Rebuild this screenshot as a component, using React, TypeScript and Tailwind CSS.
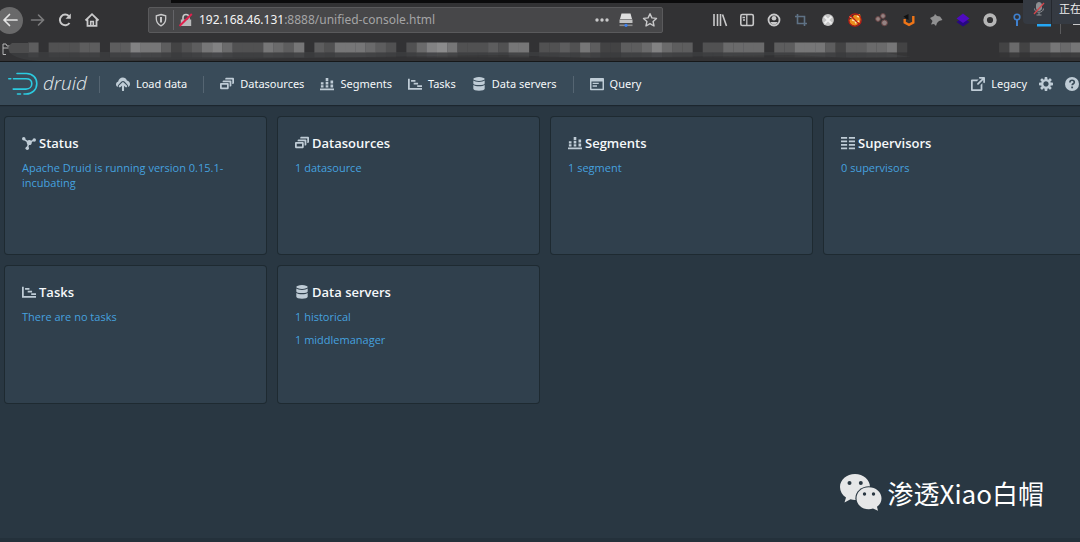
import type { ReactNode } from 'react';

type IconProps = { className?: string };

function Glyph({ className = 'size-[14px]', children }: IconProps & { children: ReactNode }) {
  return (
    <svg viewBox="0 0 16 16" className={`shrink-0 fill-[#bfccd6] ${className}`} aria-hidden="true">
      {children}
    </svg>
  );
}

const CloudUpload = (p: IconProps) => (
  <Glyph {...p}>
    <path d="M8.8 6.200a1.200 1.200 0 0 0-1.700 0l-3.600 3.600a1.200 1.200 0 0 0 1.700 1.700L6.800 10V15a1.200 1.200 0 0 0 2.400 0v-5l1.500 1.500a1.200 1.200 0 0 0 1.700-1.700z" />
    <path d="M12.500 4C11.800 1.800 10 .5 7.800.5 5 .5 2.800 2.500 2.500 5.200 1 5.700 0 7 0 8.500c0 1.300.8 2.400 1.800 2.900l.5-2L6 5.500a2.800 2.800 0 0 1 4 0l3.600 3.900.5 2c1.200-.6 1.900-1.900 1.900-3.300C16 6 14.500 4.300 12.500 4z" />
  </Glyph>
);
const MultiSelect = (p: IconProps) => (
  <Glyph {...p}>
    <path d="M12 3.980H4c-.55 0-1 .45-1 1v1h8v5h1c.55 0 1-.45 1-1v-5c0-.55-.45-1-1-1zm3-3H7c-.55 0-1 .45-1 1v1h8v5h1c.55 0 1-.45 1-1v-5c0-.55-.45-1-1-1zm-6 6H1c-.55 0-1 .45-1 1v5c0 .55.45 1 1 1h8c.55 0 1-.45 1-1v-5c0-.55-.45-1-1-1zm-1 5H2v-3h6v3z" />
  </Glyph>
);
const StackedChart = (p: IconProps) => (
  <Glyph {...p}>
    <path d="M0 13h16v2H0zM1 9.500h3V12H1zM1 6h3v2.500H1zM6.500 9.500h3V12h-3zM6.500 5.500h3v3h-3zM6.500 1h3v3.500h-3zM12 8.500h3V12h-3zM12 4h3v3.500h-3z" />
  </Glyph>
);
const Gantt = (p: IconProps) => (
  <Glyph {...p}>
    <path d="M0 2h2v10.500h14v2H0zM3.500 3.500h5v2h-5zM6.500 6.500h5v2h-5zM10.500 9.500H16v2h-5.500z" />
  </Glyph>
);
const Database = (p: IconProps) => (
  <Glyph {...p}>
    <ellipse cx="8" cy="2.300" rx="6.500" ry="2.200" />
    <path d="M1.500 4c1.200 1 3.600 1.600 6.500 1.600S13.300 5 14.500 4v3.300c0 1-2.900 1.900-6.500 1.900S1.500 8.300 1.500 7.300zM1.500 9c1.200 1 3.600 1.600 6.500 1.600s5.300-.6 6.500-1.600v4.500c0 1.300-2.900 2.300-6.500 2.300s-6.500-1-6.500-2.300z" />
  </Glyph>
);
const Application = (p: IconProps) => (
  <Glyph {...p}>
    <path fillRule="evenodd" d="M1 1h14a1 1 0 0 1 1 1v12a1 1 0 0 1-1 1H1a1 1 0 0 1-1-1V2a1 1 0 0 1 1-1zm.7 4v8.300h12.600V5zM3 6.500h7V8H3zM3 9.500h5V11H3z" />
  </Glyph>
);
const Share = (p: IconProps) => (
  <Glyph {...p}>
    <path d="M10.990 13.990h-9v-9h4.760l2-2H.99c-.55 0-1 .45-1 1v11c0 .55.45 1 1 1h11c.55 0 1-.45 1-1V7.240l-2 2v4.750zm4-14h-5c-.55 0-1 .45-1 1s.45 1 1 1h2.590L7.290 7.280a1 1 0 0 0 1.410 1.420l5.290-5.290V6c0 .55.45 1 1 1s1-.45 1-1V1c0-.56-.45-1.010-1-1.010z" />
  </Glyph>
);
const Cog = (p: IconProps) => (
  <Glyph {...p}>
    <path d="M15.19 6.39h-1.85c-.11-.37-.27-.71-.45-1.04l1.36-1.36c.31-.31.31-.82 0-1.13l-1.13-1.13c-.31-.31-.82-.31-1.13 0l-1.36 1.36c-.33-.17-.67-.33-1.04-.44V.79c0-.44-.36-.8-.8-.8h-1.6c-.44 0-.8.36-.8.8v1.86c-.39.12-.75.28-1.1.47l-1.3-1.3c-.3-.3-.79-.3-1.09 0L1.820 2.910c-.3.3-.3.79 0 1.090l1.300 1.300c-.2.34-.36.7-.48 1.090H.79c-.44 0-.8.36-.8.8v1.600c0 .44.36.8.8.8h1.850c.11.37.27.71.45 1.040l-1.360 1.360c-.31.31-.31.82 0 1.130l1.130 1.130c.31.31.82.31 1.130 0l1.360-1.360c.33.18.67.33 1.040.44v1.860c0 .44.36.8.8.8h1.600c.44 0 .8-.36.8-.8v-1.860c.39-.12.75-.28 1.100-.47l1.300 1.300c.3.3.79.3 1.090 0l1.090-1.090c.3-.3.3-.79 0-1.090l-1.300-1.300c.19-.35.36-.71.48-1.100h1.850c.44 0 .8-.36.8-.8v-1.600a.816.816 0 0 0-.81-.79zm-7.200 4.600c-1.660 0-3-1.340-3-3s1.340-3 3-3 3 1.340 3 3-1.340 3-3 3z" />
  </Glyph>
);
const Help = (p: IconProps) => (
  <Glyph {...p}>
    <circle cx="8" cy="8" r="8" />
    <path d="M5.600 6.200C5.600 4.600 6.600 3.700 8.100 3.700s2.500.9 2.500 2.200c0 1.800-2.400 1.800-2.400 3.600" fill="none" stroke="#394b59" strokeWidth="1.900" />
    <rect x="7.100" y="10.900" width="2.100" height="2" fill="#394b59" />
  </Glyph>
);
const Graph = (p: IconProps) => (
  <Glyph {...p}>
    <path d="M2 3.500l6 4 6-3M8 7.500L6 14" stroke="#bfccd6" strokeWidth="1.700" fill="none" />
    <circle cx="2" cy="3" r="2" />
    <circle cx="14" cy="4.500" r="2" />
    <circle cx="8.300" cy="7.500" r="2.900" />
    <circle cx="6" cy="14" r="2" />
  </Glyph>
);
const ListColumns = (p: IconProps) => (
  <Glyph {...p}>
    <path d="M0 1h7v2H0zM0 5h7v2H0zM0 9h7v2H0zM0 13h7v2H0zM9 1h7v2H9zM9 5h7v2H9zM9 9h7v2H9zM9 13h7v2H9z" />
  </Glyph>
);

function DruidLogo() {
  return (
    <span className="flex items-center gap-[5px]">
      <svg viewBox="0 0 30 24" className="h-6 w-[30px]" fill="none" stroke="#2ccbe0" strokeWidth="1.600" strokeLinecap="round" aria-hidden="true">
        <path d="M9 1.500h9.500c6 0 10.300 4.200 10.300 9.900 0 6.500-4.800 10.600-10.800 10.600h-2M9.500 22h3" />
        <path d="M5.500 6.700h12.500c3.500 0 5.800 2 5.800 5s-2.400 5.400-5.800 5.400H5.200M.8 6.700h2" />
      </svg>
      <span className="pb-0.5 font-['Open_Sans',sans-serif] text-[19px] leading-6 font-light text-[#e8edf1] italic">druid</span>
    </span>
  );
}

const Divider = () => <span className="h-[17px] w-px bg-[#556572]" />;

function NavLink({ icon, label }: { icon: ReactNode; label: string }) {
  return (
    <a href={`#${label}`} className="flex items-center gap-1.5 whitespace-nowrap">
      {icon}
      <span>{label}</span>
    </a>
  );
}

/* One brightness digit per censored cell; a dot is an empty cell. */
const MOSAIC =
  '...5.44455.558775345786444765' +
  '7.54777654.468974445477.445475335568655.446666.5577753556673.........363557676';
const SHADES: Record<string, string> = {
  '3': '#434344', '4': '#515152', '5': '#5d5d5e', '6': '#6a6a6b',
  '7': '#767677', '8': '#828283', '9': '#8b8b8c',
};

function BookmarkMosaic() {
  return (
    <svg className="h-[21px] w-[1090px] shrink-0" viewBox="0 0 1090 21" aria-hidden="true">
      <path d="M3 14.500V4h3l1 2h4M3 14.500h3M3 8h8" stroke="#b5b5b6" fill="none" />
      <path d="M9 12h872l30 5-60 1-60-3-200 3-90-3-270 4-80 1-50 1H40Q16 20 9 12z" fill="#3a3b3d" />
      {Array.from(MOSAIC, (c, i) => {
        if (c === '.') return null;
        const x = i * 10.22 - 2.46;
        return (
          <g key={i} fill={SHADES[c]}>
            <rect x={x} y="2.500" width="10.400" height="10" />
            <rect x={x} y="12.500" width="10.400" height="5" opacity="0.180" />
          </g>
        );
      })}
      <path d="M12 3h17v10H10q-4-6 2-10" fill="#4d4d4e" />
    </svg>
  );
}

function ToolButton({ label, children }: { label: string; children: ReactNode }) {
  return (
    <button type="button" aria-label={label} className="flex size-4 shrink-0 items-center justify-center">
      <svg viewBox="0 0 16 16" className="size-4" fill="none" stroke="#c9c9ca" strokeWidth="1.600">
        {children}
      </svg>
    </button>
  );
}

function Browser() {
  return (
    <div className="relative bg-[#323234] font-['Noto_Sans','Noto_Sans_CJK_SC',sans-serif]">
      <div className="ml-[171px] h-[3px] bg-[#0b0b0c]" />
      <div className="flex h-[37px] items-center overflow-hidden pb-[3px]">
        <button type="button" aria-label="Back" className="-ml-1 flex size-[27px] shrink-0 items-center justify-center rounded-full bg-[#69696a]">
          <svg viewBox="0 0 16 16" className="size-4" fill="none" stroke="#e4e4e4" strokeWidth="1.700" strokeLinecap="round" strokeLinejoin="round">
            <path d="M15 8H2M7.500 2.500L2 8l5.500 5.500" />
          </svg>
        </button>
        <div className="ml-[7px] flex gap-[11px]">
          <ToolButton label="Forward">
            <path d="M1.500 8h12M8.500 3l5 5-5 5" stroke="#7b7b7c" strokeLinecap="round" />
          </ToolButton>
          <ToolButton label="Reload">
            <path d="M12.500 11A5.300 5.300 0 1 1 12 4.200" strokeWidth="2" />
            <path d="M13.800 1.500v5.300H8.500z" fill="#c9c9ca" stroke="none" />
          </ToolButton>
          <ToolButton label="Home">
            <path d="M1.500 8.500L8 2.200l6.500 6.300M3.500 7.500v6.300h9V7.500" strokeWidth="1.800" />
            <path d="M6.700 14V9.500h2.600V14" />
          </ToolButton>
        </div>
        <div className="ml-12 flex h-[26px] w-[515px] shrink-0 items-center rounded-[2px] border border-[#5a5a5c] bg-[#474749] pr-1 pl-1">
          <ToolButton label="Protection">
            <path d="M8 2.500l4.700 1.300v3c0 3.500-1.700 5.500-4.700 7-3-1.500-4.700-3.500-4.700-7v-3z" strokeWidth="1.300" />
            <path d="M8 5v5.500" strokeWidth="2" />
          </ToolButton>
          <span className="mr-1 ml-1 h-5 w-px bg-[#646468]" />
          <ToolButton label="Connection is not secure">
            <path d="M5 8V5.500a3 3 0 0 1 6 0V8" />
            <path d="M2.800 7.500h10.400v6.500H2.800z" fill="#b9b9ba" stroke="none" />
            <path d="M1.500 14L13.800 2" stroke="#e0214d" strokeWidth="2" />
          </ToolButton>
          <div className="relative ml-[5px] flex-1 text-[12px] leading-4">
            <input aria-label="Address" readOnly value="192.168.46.131:8888/unified-console.html" className="absolute inset-0 w-full bg-transparent text-transparent outline-none" />
            <span className="text-[#f4f4f4]">192.168.46.131</span>
            <span className="text-[#a4a4a5]">:8888/unified-console.html</span>
          </div>
          <div className="flex gap-2">
            <ToolButton label="Page actions">
              <g fill="#c9c9ca" stroke="none">
                <circle cx="3" cy="8" r="1.700" /><circle cx="8" cy="8" r="1.700" /><circle cx="13" cy="8" r="1.700" />
              </g>
            </ToolButton>
            <ToolButton label="Server">
              <path d="M3.500 1.500h9L14 7H2z" fill="#dedede" stroke="none" />
              <path d="M1.500 7.500h13v3.500h-13z" fill="#c2c2c2" stroke="none" />
              <path d="M1.500 13.300h13" stroke="#8b8b8c" />
              <circle cx="8" cy="13.300" r="1.600" fill="#3f82f0" stroke="none" />
            </ToolButton>
            <ToolButton label="Bookmark this page">
              <path d="M8 1.700l1.900 4.200 4.600.5-3.400 3.100.9 4.500-4-2.300L4 14l.9-4.500-3.400-3.100 4.600-.5z" strokeWidth="1.400" strokeLinejoin="round" />
            </ToolButton>
          </div>
        </div>
        <div className="ml-[49px] flex shrink-0 gap-[11px]">
          <ToolButton label="Library">
            <path d="M2 2v12M5.500 2v12M8.500 2v12M10.500 2.500l4 11.500" />
          </ToolButton>
          <ToolButton label="Sidebars">
            <rect x="1.800" y="2.500" width="12.500" height="11" rx="1.500" />
            <path d="M7.800 3v10M3.500 5.500h2.500M4 8h2" strokeWidth="1.300" />
          </ToolButton>
          <ToolButton label="Account">
            <circle cx="8" cy="8" r="5.500" strokeWidth="1.800" />
            <circle cx="8" cy="6.200" r="2.300" fill="#c9c9ca" stroke="none" />
            <path d="M4.300 10h7.400c-1 2-2.300 2.500-3.700 2.500S5.300 12 4.300 10z" fill="#c9c9ca" stroke="none" />
          </ToolButton>
          <ToolButton label="Crop">
            <path d="M4.500 2v9.500H14M2 4.500h9.500V14" stroke="#5f7285" />
          </ToolButton>
          <ToolButton label="Proxy">
            <circle cx="8" cy="8" r="5.900" fill="#c4c4c4" stroke="none" />
            <path d="M4.500 4.500l7 7M11.500 4.500l-7 7" stroke="#eeeeee" strokeWidth="2" />
          </ToolButton>
          <ToolButton label="Blocker">
            <path d="M2 8l3-2 2-3 6-1 1 5-1 4-5 3-5-2z" fill="#ec8e1c" stroke="none" />
            <path d="M5 8l4 1M8 11l4-2M10 4l2 1M2 5h3" stroke="#fbe4a6" />
            <circle cx="8" cy="8" r="6.200" stroke="#bd1b14" strokeWidth="1.200" />
            <path d="M3.500 3.500l9 9" stroke="#bd1b14" strokeWidth="1.200" />
          </ToolButton>
          <ToolButton label="Cells">
            <g fill="#948383" stroke="#694444" strokeWidth="1">
              <circle cx="4" cy="7" r="2.400" /><circle cx="9" cy="4" r="2.400" /><circle cx="10.500" cy="10.800" r="2.900" />
            </g>
          </ToolButton>
          <ToolButton label="Bitbucket">
            <path d="M3.700 7v3.500L8 12.800l4.300-2.300V4" stroke="#ef7517" strokeWidth="2.400" />
            <path d="M2.500 4.500L7.500 2v6L5 6.500z" fill="#111111" stroke="none" />
          </ToolButton>
          <ToolButton label="Hunter">
            <path d="M2 6l4-2 1-2 2 2 3 .5L14.500 8 11 9l-2 2-1 3-2-2-3 .5L4.500 9z" fill="#909091" stroke="none" />
          </ToolButton>
          <ToolButton label="Layers">
            <path d="M1.500 10L8 5.500l6.500 4.500L8 14.500z" fill="#270783" stroke="none" />
            <path d="M1.500 6.500L8 1.500l6.500 5L8 11z" fill="#4f0bc0" stroke="none" />
          </ToolButton>
          <ToolButton label="Ring">
            <circle cx="8" cy="8" r="4.900" stroke="#b6b6b6" strokeWidth="3.600" />
          </ToolButton>
          <ToolButton label="Pin">
            <circle cx="8" cy="5" r="2.800" stroke="#3f80cf" />
            <path d="M8 8v6" stroke="#3f80cf" strokeWidth="2" />
          </ToolButton>
          <ToolButton label="Download">
            <path d="M1 13h14" stroke="#25a7f5" strokeWidth="3" />
          </ToolButton>
        </div>
        <span className="mt-4 ml-2 h-3 w-px shrink-0 bg-[#5b5b5d]" />
        <span className="mt-2 ml-3 h-px w-3 shrink-0 bg-[#c9c9ca]" />
      </div>
      <div className="flex h-[21px] overflow-hidden">
        <BookmarkMosaic />
      </div>
      <div className="h-px bg-[#161819]" />
      <div className="absolute top-0 right-0 flex h-6 w-[57px] overflow-hidden rounded-bl-[4px] bg-[#353a42] text-[11px] leading-[18px] text-[#eeeeee]">
        <svg viewBox="0 0 16 16" className="mt-px ml-2 size-4 shrink-0" fill="none" stroke="#8d8f93" aria-hidden="true">
          <rect x="5.500" y="1.500" width="5" height="8" rx="2.500" fill="#8d8f93" />
          <path d="M3.500 7.500c0 5 9 5 9 0M8 11.500V14M5.500 14h5" />
          <path d="M3 13L13 2" stroke="#d5454b" strokeWidth="1.300" />
        </svg>
        <span className="ml-1 w-px shrink-0 bg-[#25282e]" />
        <span className="ml-[7px] shrink-0 whitespace-nowrap">正在</span>
      </div>
    </div>
  );
}

function Card({ icon, title, links }: { icon: ReactNode; title: string; links: string[] }) {
  return (
    <section className="h-[137px] rounded-[3px] bg-[#30404d] px-[17px] pt-[17px] shadow-[0_0_0_1px_rgba(16,22,26,0.4)]">
      <h2 className="flex items-center gap-[3px] text-[13px] leading-[18px] font-semibold text-[#f5f8fa]">
        {icon}
        {title}
      </h2>
      <div className="mt-2 flex flex-col items-start gap-2">
        {links.map((l) => (
          <a key={l} href="#view" className="text-[11px] leading-[15px] text-[#48aff0]/90">
            {l}
          </a>
        ))}
      </div>
    </section>
  );
}

export default function App() {
  return (
    <div className="relative flex min-h-screen flex-col overflow-x-hidden bg-[#293742] font-['Open_Sans','Noto_Sans_CJK_SC',sans-serif]">
      <Browser />
      <header className="flex h-[43px] items-center bg-[#394b59] pt-px pr-px pl-2 font-['Noto_Sans',sans-serif] text-[11px] leading-4 text-[#f5f8fa] shadow-[0_1px_1px_rgba(16,22,26,0.5)]">
        <DruidLogo />
        <nav className="ml-3 flex items-center gap-4">
          <Divider />
          <NavLink icon={<CloudUpload />} label="Load data" />
          <Divider />
          <NavLink icon={<MultiSelect />} label="Datasources" />
          <NavLink icon={<StackedChart />} label="Segments" />
          <NavLink icon={<Gantt />} label="Tasks" />
          <NavLink icon={<Database />} label="Data servers" />
          <Divider />
          <NavLink icon={<Application />} label="Query" />
        </nav>
        <div className="ml-auto flex items-center gap-3">
          <NavLink icon={<Share />} label="Legacy" />
          <button type="button" aria-label="Settings"><Cog /></button>
          <button type="button" aria-label="Help"><Help /></button>
        </div>
      </header>
      <main className="mt-3 -mr-[5px] ml-[5px] grid grid-cols-4 gap-3">
        <Card icon={<Graph />} title="Status" links={['Apache Druid is running version 0.15.1-incubating']} />
        <Card icon={<MultiSelect />} title="Datasources" links={['1 datasource']} />
        <Card icon={<StackedChart />} title="Segments" links={['1 segment']} />
        <Card icon={<ListColumns />} title="Supervisors" links={['0 supervisors']} />
        <Card icon={<Gantt />} title="Tasks" links={['There are no tasks']} />
        <Card icon={<Database />} title="Data servers" links={['1 historical', '1 middlemanager']} />
      </main>
      <div className="absolute right-9 bottom-[31px] flex items-center gap-1.5 font-['Noto_Sans_CJK_SC',sans-serif] text-[26px] leading-9 text-white">
        <svg viewBox="0 0 42 37" className="h-[37px] w-[42px]" aria-hidden="true">
          <path d="M15 0C6.700 0 0 5.700 0 13c0 4.300 2.300 8 6 10.500L4.500 28.500l6-3.200c1.500.4 3 .6 4.500.6 8.300 0 15-5.700 15-12.900S23.300 0 15 0z" fill="#e6e7e8" />
          <ellipse cx="28.800" cy="24.200" rx="13.400" ry="12" fill="#293742" />
          <path d="M28.800 13.200c-7 0-12.300 4.800-12.300 11s5.300 11 12.300 11c1.500 0 2.900-.2 4.200-.6l5 2.200-1-4c3-2.200 4.500-5.200 4.500-8.600 0-6.200-5.700-11-12.700-11z" fill="#e6e7e8" />
          <g fill="#293742">
            <circle cx="9.500" cy="9" r="2" /><circle cx="20.800" cy="9" r="2" />
            <circle cx="24.500" cy="20" r="1.700" /><circle cx="33.500" cy="20" r="1.700" />
          </g>
        </svg>
        <span>渗透Xiao白帽</span>
      </div>
      <div className="mt-auto h-1 bg-[#24313b]" />
    </div>
  );
}
